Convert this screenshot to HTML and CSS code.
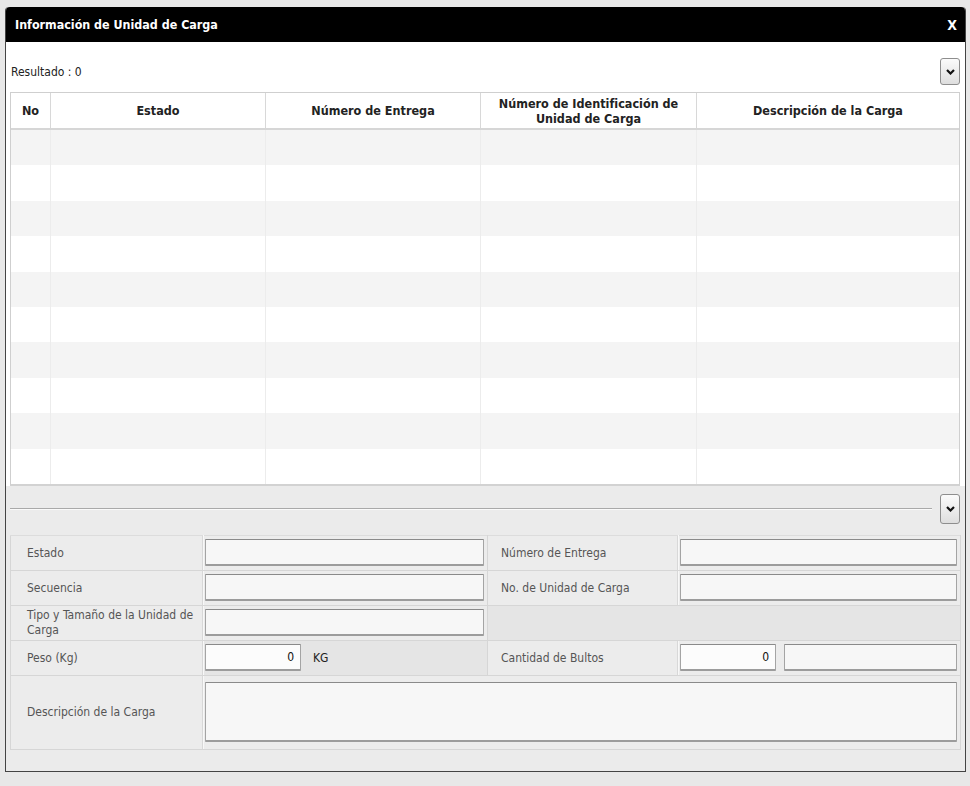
FILE: index.html
```html
<!DOCTYPE html>
<html lang="es">
<head>
<meta charset="utf-8">
<title>Información de Unidad de Carga</title>
<link rel="stylesheet" href="styles.css">
</head>
<body>
<div class="window">
  <div class="titlebar">
    <span class="title">Información de Unidad de Carga</span>
    <span class="close">X</span>
  </div>
  <div class="upper">
    <div class="toolbar">
      <span class="result">Resultado : 0</span>
      <button class="chev" type="button"><svg width="9" height="6" viewBox="0 0 9 6"><path d="M1 1 L4.5 4.5 L8 1" fill="none" stroke="#111" stroke-width="2.2"/></svg></button>
    </div>
    <div class="grid">
      <div class="ghead">
        <div class="c c-no">No</div>
        <div class="c c-est">Estado</div>
        <div class="c c-ent">Número de Entrega</div>
        <div class="c c-id">Número de Identificación de<br>Unidad de Carga</div>
        <div class="c c-desc">Descripción de la Carga</div>
      </div>
      <div class="grow odd"><div class="c c-no"></div><div class="c c-est"></div><div class="c c-ent"></div><div class="c c-id"></div><div class="c c-desc"></div></div>
      <div class="grow"><div class="c c-no"></div><div class="c c-est"></div><div class="c c-ent"></div><div class="c c-id"></div><div class="c c-desc"></div></div>
      <div class="grow odd"><div class="c c-no"></div><div class="c c-est"></div><div class="c c-ent"></div><div class="c c-id"></div><div class="c c-desc"></div></div>
      <div class="grow"><div class="c c-no"></div><div class="c c-est"></div><div class="c c-ent"></div><div class="c c-id"></div><div class="c c-desc"></div></div>
      <div class="grow odd"><div class="c c-no"></div><div class="c c-est"></div><div class="c c-ent"></div><div class="c c-id"></div><div class="c c-desc"></div></div>
      <div class="grow"><div class="c c-no"></div><div class="c c-est"></div><div class="c c-ent"></div><div class="c c-id"></div><div class="c c-desc"></div></div>
      <div class="grow odd"><div class="c c-no"></div><div class="c c-est"></div><div class="c c-ent"></div><div class="c c-id"></div><div class="c c-desc"></div></div>
      <div class="grow"><div class="c c-no"></div><div class="c c-est"></div><div class="c c-ent"></div><div class="c c-id"></div><div class="c c-desc"></div></div>
      <div class="grow odd"><div class="c c-no"></div><div class="c c-est"></div><div class="c c-ent"></div><div class="c c-id"></div><div class="c c-desc"></div></div>
      <div class="grow"><div class="c c-no"></div><div class="c c-est"></div><div class="c c-ent"></div><div class="c c-id"></div><div class="c c-desc"></div></div>
    </div>
  </div>
  <div class="lower">
    <div class="sepbar">
      <div class="sepline"></div>
      <button class="chev chev-tall" type="button"><svg width="9" height="6" viewBox="0 0 9 6"><path d="M1 1 L4.5 4.5 L8 1" fill="none" stroke="#111" stroke-width="2.2"/></svg></button>
    </div>
    <table class="form">
      <colgroup><col class="w-l1"><col class="w-v1"><col class="w-l2"><col class="w-v2"></colgroup>
      <tr>
        <th>Estado</th>
        <td><div class="inp"></div></td>
        <th class="l2">Número de Entrega</th>
        <td><div class="inp"></div></td>
      </tr>
      <tr>
        <th>Secuencia</th>
        <td><div class="inp"></div></td>
        <th class="l2">No. de Unidad de Carga</th>
        <td><div class="inp"></div></td>
      </tr>
      <tr>
        <th class="two">Tipo y Tamaño de la Unidad de Carga</th>
        <td><div class="inp"></div></td>
        <td class="empty" colspan="2"></td>
      </tr>
      <tr>
        <th>Peso (Kg)</th>
        <td class="dark"><div class="pair"><div class="inp num">0</div><span class="unit">KG</span></div></td>
        <th class="l2">Cantidad de Bultos</th>
        <td><div class="pair"><div class="inp num">0</div><div class="inp grow1"></div></div></td>
      </tr>
      <tr class="tall">
        <th>Descripción de la Carga</th>
        <td colspan="3"><div class="inp area"></div></td>
      </tr>
    </table>
  </div>
</div>
</body>
</html>
```

FILE: styles.css
```css
* { box-sizing: border-box; }
html, body { margin: 0; padding: 0; }
body {
  background: #e8e8e8;
  font-family: "DejaVu Sans Condensed", "DejaVu Sans", sans-serif;
  font-size: 12px;
  color: #333;
  width: 970px;
  height: 786px;
  overflow: hidden;
}
.window {
  margin: 7px 0 0 5px;
  width: 961px;
  height: 765px;
  border: 1px solid #444;
  border-top: 0;
  border-radius: 4px 4px 0 0;
  background: #ebebeb;
  display: flex;
  flex-direction: column;
}
.titlebar {
  height: 35px;
  background: #000;
  color: #fff;
  display: flex;
  align-items: center;
  justify-content: space-between;
  padding: 0 8px 0 9px;
  border-radius: 4px 4px 0 0;
  font-weight: bold;
  font-size: 12.4px;
}
.close { font-size: 14px; }
.upper {
  background: #fff;
  padding: 14px 5px 0 4px;
}
.toolbar {
  display: flex;
  align-items: center;
  justify-content: space-between;
  height: 27px;
  margin-bottom: 9px;
  padding-top: 4px;
}
.result { color: #222; font-size: 12px; padding-left: 1px; }
.chev {
  width: 20px;
  height: 27px;
  padding: 0;
  border: 1px solid #8e8e8e;
  border-radius: 3px;
  background: linear-gradient(#fbfbfb, #dedede);
  display: flex;
  align-items: center;
  justify-content: center;
  margin-right: 0;
}
.chev-tall { height: 30px; }
.grid {
  border: 1px solid #cfcfcf;
  border-bottom: 2px solid #d2d2d2;
}
.ghead, .grow { display: flex; }
.ghead {
  height: 37px;
  border-bottom: 2px solid #d6d6d6;
  font-weight: bold;
  color: #222;
  font-size: 12.5px;
  text-align: center;
  line-height: 15px;
}
.ghead .c {
  display: flex;
  align-items: center;
  justify-content: center;
  border-right: 1px solid #d8d8d8;
}
.grow { height: 35.4px; }
.grow.odd { background: #f4f4f4; }
.grow .c { border-right: 1px solid #ececec; }
.c:last-child { border-right: 0 !important; }
.c-no { width: 40px; }
.c-est { width: 215px; }
.c-ent { width: 215px; }
.c-id { width: 216px; }
.c-desc { flex: 1; }
.lower {
  padding: 8px 5px 0 4px;
  flex: 1;
}
.sepbar {
  display: flex;
  align-items: center;
  height: 30px;
}
.sepline {
  flex: 1;
  height: 2px;
  border-top: 1px solid #a9a9a9;
  border-bottom: 1px solid #fafafa;
  margin-right: 8px;
}
.form {
  margin-top: 11px;
  width: 950px;
  border-collapse: collapse;
  table-layout: fixed;
  border: 1px solid #d0d0d0;
}
.w-l1 { width: 193px; }
.w-v1 { width: 284px; }
.w-l2 { width: 191px; }
.w-v2 { width: 282px; }
.form tr { height: 35px; }
.form tr.tall { height: 74px; }
.form th, .form td {
  border: 1px solid #d6d6d6;
  border-top-color: #dcdcdc;
  padding: 0;
  vertical-align: middle;
}
.form th {
  background: #ececec;
  font-weight: normal;
  text-align: left;
  color: #555;
  font-size: 12px;
  padding-left: 16px;
  border-right-color: #f8f8f8;
  box-shadow: inset -1px 0 0 #d8d8d8;
}
.form th.l2 { padding-left: 13px; }
.form th.two { line-height: 15px; padding-top: 1px; }
.form td { background: #ececec; padding: 0 3px 0 1px; }
.form td.empty, .form td.dark { background: #e5e5e5; }
.inp {
  height: 27px;
  background: #f7f7f7;
  border: 1px solid #a4a4a4;
  border-top-color: #8a8a8a;
  border-bottom: 2px solid #9c9c9c;
  border-radius: 1px;
  width: 100%;
}
.pair { display: flex; align-items: center; }
.inp.num {
  width: 96px;
  text-align: right;
  padding-right: 6px;
  line-height: 24px;
  color: #111;
  background: #fcfcfc;
}
.unit { margin-left: 12px; color: #222; }
.inp.grow1 { flex: 1; margin-left: 8px; width: auto; }
.inp.area { height: 60px; }
```
